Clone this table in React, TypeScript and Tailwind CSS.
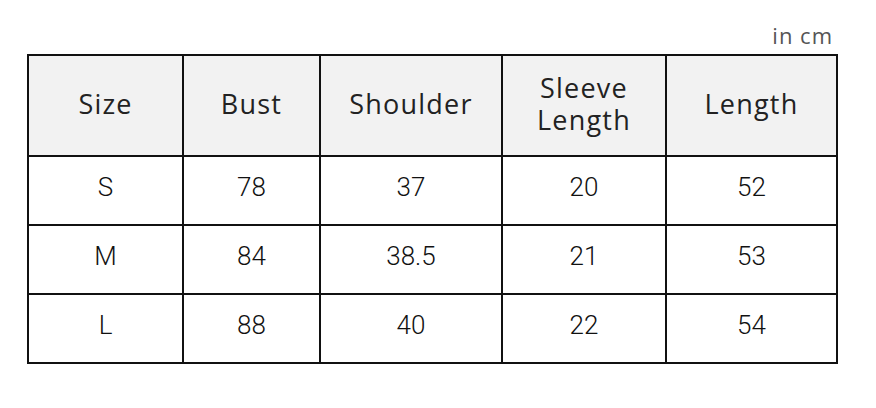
import React from "react";

const headers = ["Size", "Bust", "Shoulder", "Sleeve\nLength", "Length"];
const rows = [
  ["S", "78", "37", "20", "52"],
  ["M", "84", "38.5", "21", "53"],
  ["L", "88", "40", "22", "54"],
];

export default function App() {
  return (
    <div className="w-[876px] h-[408px] bg-white relative overflow-hidden">
      <div className="pl-[27px] pt-[20px]">
        <div className="w-[810px] flex justify-end pr-[4px] h-[34px] items-start">
          <span className="text-[22px] leading-[30px] text-[#555555] tracking-[1px]" style={{ fontFamily: '"Open Sans", sans-serif' }}>in cm</span>
        </div>
        <div className="grid grid-cols-[155px_137px_182px_164px_171px] border-l-2 border-t-2 border-[#111111] w-[811px]">
          {headers.map((h) => (
            <div
              key={h}
              className="h-[101px] bg-[#f2f2f2] border-r-2 border-b-2 border-[#111111] flex items-center justify-center text-center whitespace-pre-line text-[27px] leading-[32px] text-[#222222] tracking-[1.2px] pb-[4px]"
              style={{ fontFamily: '"Open Sans", sans-serif' }}
            >
              {h}
            </div>
          ))}
          {rows.map((r) =>
            r.map((c, i) => (
              <div
                key={r[0] + i}
                className="h-[69px] border-r-2 border-b-2 border-[#111111] flex items-center justify-center text-[26px] text-[#111111] font-light pb-[6px]"
                style={{ fontFamily: 'Roboto, sans-serif' }}
              >
                {c}
              </div>
            ))
          )}
        </div>
      </div>
    </div>
  );
}
